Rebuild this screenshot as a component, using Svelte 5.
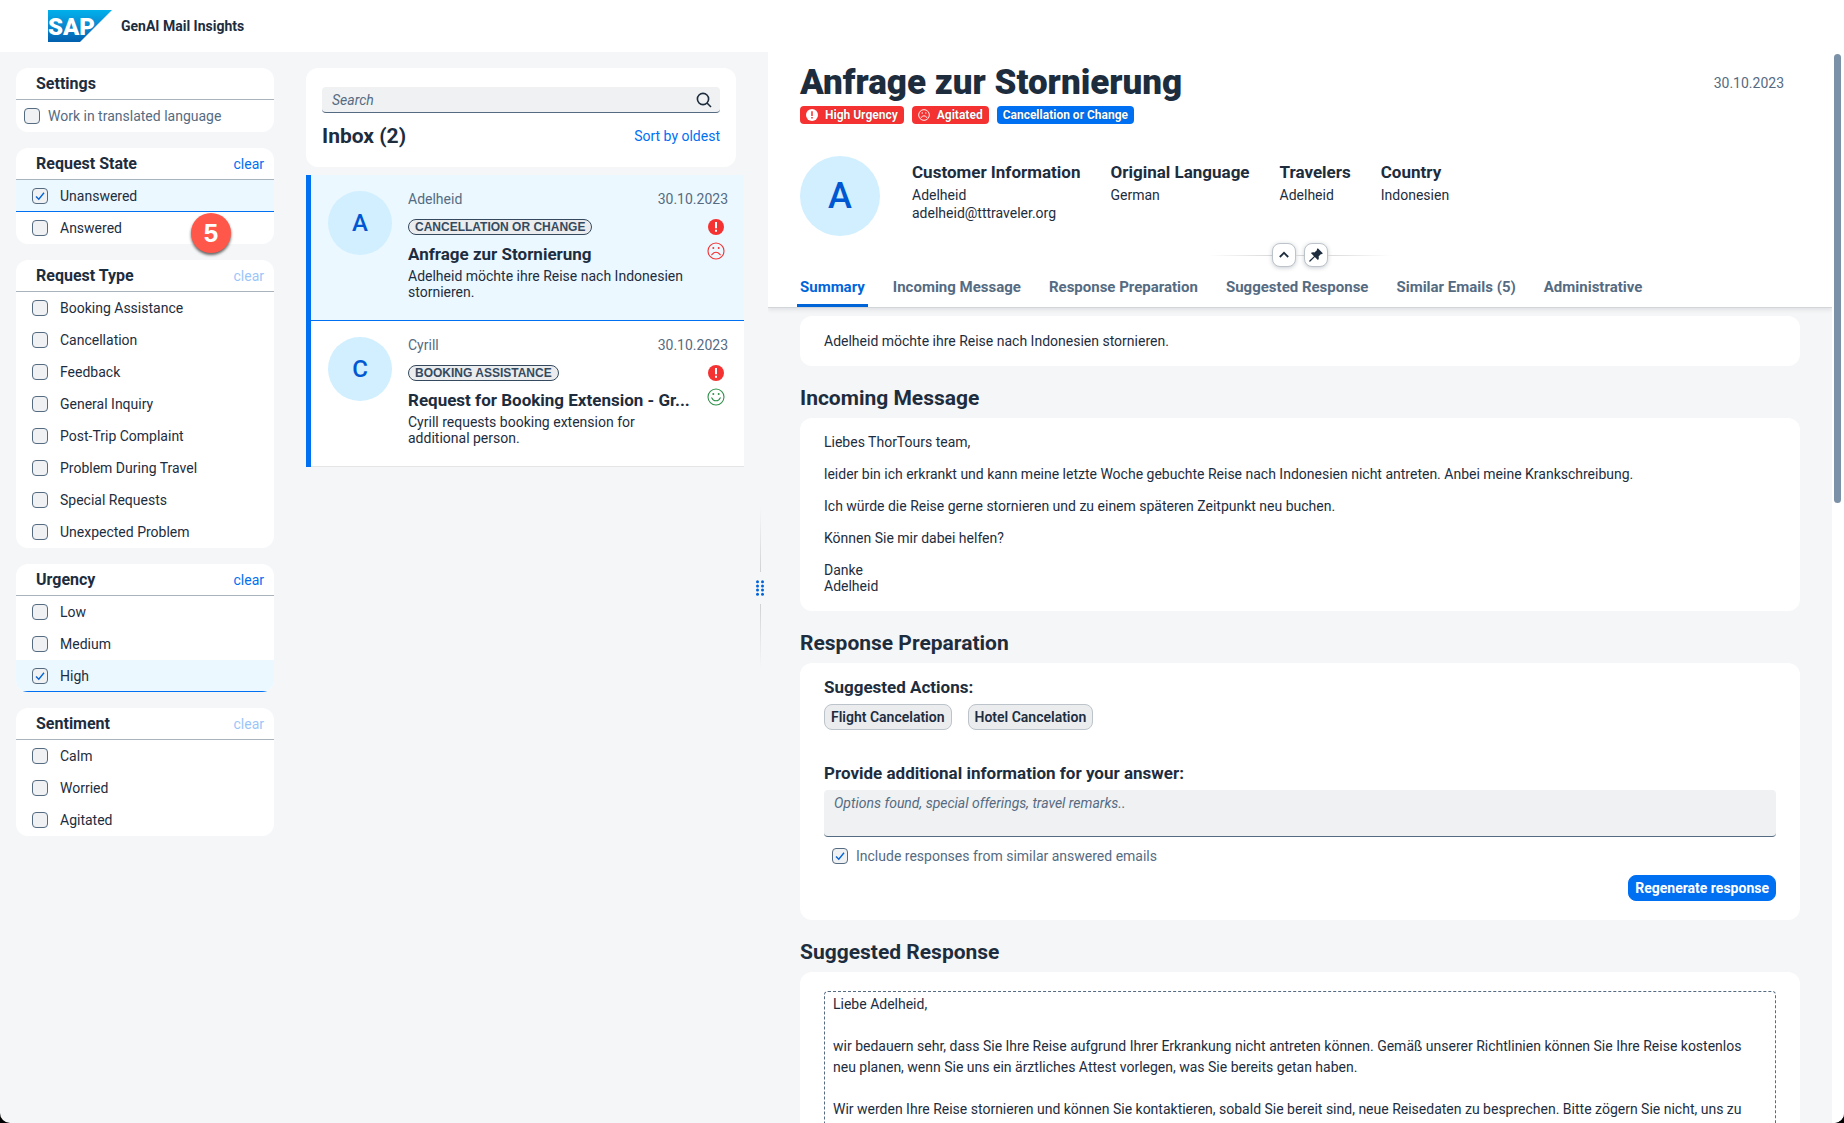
<script>
  const groups = [
    { title: 'Request State', clear: true, items: [['Unanswered', true], ['Answered', false]] },
    {
      title: 'Request Type',
      clear: false,
      items: [
        ['Booking Assistance', false],
        ['Cancellation', false],
        ['Feedback', false],
        ['General Inquiry', false],
        ['Post-Trip Complaint', false],
        ['Problem During Travel', false],
        ['Special Requests', false],
        ['Unexpected Problem', false]
      ]
    },
    { title: 'Urgency', clear: true, items: [['Low', false], ['Medium', false], ['High', true]] },
    { title: 'Sentiment', clear: false, items: [['Calm', false], ['Worried', false], ['Agitated', false]] }
  ];

  const mails = [
    {
      name: 'Adelheid',
      date: '30.10.2023',
      tag: 'CANCELLATION OR CHANGE',
      title: 'Anfrage zur Stornierung',
      text: 'Adelheid möchte ihre Reise nach Indonesien stornieren.',
      happy: false,
      selected: true
    },
    {
      name: 'Cyrill',
      date: '30.10.2023',
      tag: 'BOOKING ASSISTANCE',
      title: 'Request for Booking Extension - Gr...',
      text: 'Cyrill requests booking extension for additional person.',
      happy: true,
      selected: false
    }
  ];

  const facts = [
    ['Customer Information', ['Adelheid', 'adelheid@tttraveler.org']],
    ['Original Language', ['German']],
    ['Travelers', ['Adelheid']],
    ['Country', ['Indonesien']]
  ];

  const tabs = [
    'Summary',
    'Incoming Message',
    'Response Preparation',
    'Suggested Response',
    'Similar Emails (5)',
    'Administrative'
  ];

  const reply = [
    'Liebe Adelheid,',
    '',
    'wir bedauern sehr, dass Sie Ihre Reise aufgrund Ihrer Erkrankung nicht antreten können. Gemäß unserer Richtlinien können Sie Ihre Reise kostenlos',
    'neu planen, wenn Sie uns ein ärztliches Attest vorlegen, was Sie bereits getan haben.',
    '',
    'Wir werden Ihre Reise stornieren und können Sie kontaktieren, sobald Sie bereit sind, neue Reisedaten zu besprechen. Bitte zögern Sie nicht, uns zu'
  ].join('\n');
</script>

{#snippet check(label, checked)}
  <span class="box">
    <input type="checkbox" {checked} />
    <svg viewBox="0 0 16 16" aria-hidden="true"><path d="M4 8.4 L6.8 11.2 L12 4.8" /></svg>
  </span>
  <span>{label}</span>
{/snippet}

{#snippet alertIcon()}
  <svg class="alert" viewBox="0 0 16 16" aria-hidden="true">
    <circle cx="8" cy="8" r="8" />
    <path d="M7 3h2v6.2H7zM7 10.8h2v2H7z" />
  </svg>
{/snippet}

{#snippet face(happy)}
  <svg class="face" class:happy viewBox="0 0 18 18" aria-hidden="true">
    <circle class="ring" cx="9" cy="9" r="8" />
    <circle class="eye" cx="6.3" cy="6" r="1" />
    <circle class="eye" cx="11.7" cy="6" r="1" />
    {#if happy}
      <path d="M4.2 9.6 L5.2 10.4 C6 13.6 12 13.6 12.8 10.4 L13.8 9.6" />
    {:else}
      <path d="M4.4 13.2 L5.4 12.2 C7 9.6 11 9.6 12.6 12.2 L13.6 13.2 M5.4 12.2 L5 11.6 M12.6 12.2 L13 11.6" />
    {/if}
  </svg>
{/snippet}

<div class="app">
  <header class="shell">
    <svg class="logo" viewBox="0 0 64 32" role="img" aria-label="SAP">
      <defs>
        <linearGradient id="sap" x1="0" y1="0" x2="0" y2="1">
          <stop offset="0" stop-color="#00b1eb" />
          <stop offset="0.5" stop-color="#0a87cf" />
          <stop offset="1" stop-color="#0160ae" />
        </linearGradient>
      </defs>
      <polygon points="0,0 64,0 32,32 0,32" fill="url(#sap)" />
      <text x="0" y="25">SAP</text>
    </svg>
    <span class="product">GenAI Mail Insights</span>
  </header>

  <div class="columns">
    <aside class="filters">
      <section class="card">
        <div class="card-head"><h2>Settings</h2></div>
        <label class="row setting">{@render check('Work in translated language', false)}</label>
      </section>
      {#each groups as group, i}
        <section class="card">
          <div class="card-head">
            <h2>{group.title}</h2>
            <button class="link" disabled={!group.clear}>clear</button>
          </div>
          {#each group.items as [label, on]}
            <label class="row" class:on>{@render check(label, on)}</label>
          {/each}
          {#if i === 0}<span class="marker">5</span>{/if}
        </section>
      {/each}
    </aside>

    <section class="inbox">
      <div class="inbox-head">
        <div class="search">
          <input type="search" placeholder="Search" aria-label="Search" />
          <svg viewBox="0 0 16 16" aria-hidden="true"><circle cx="7" cy="7" r="5.6" /><path d="M11 11 L15 15" /></svg>
        </div>
        <div class="inbox-title">
          <h2>Inbox (2)</h2>
          <button class="link">Sort by oldest</button>
        </div>
      </div>
      <ul>
        {#each mails as mail}
          <li class="mail" class:selected={mail.selected}>
            <span class="avatar">{mail.name[0]}</span>
            <div class="mail-body">
              <div class="meta"><span>{mail.name}</span><span>{mail.date}</span></div>
              <div class="split">
                <div class="words">
                  <span class="tag">{mail.tag}</span>
                  <h3>{mail.title}</h3>
                  <p>{mail.text}</p>
                </div>
                <div class="icons">{@render alertIcon()}{@render face(mail.happy)}</div>
              </div>
            </div>
          </li>
        {/each}
      </ul>
    </section>

    <div class="splitter">
      <span class="line up"></span>
      <svg viewBox="0 0 8 16" aria-hidden="true">
        {#each [0, 1, 2, 3] as r}
          <circle cx="1.5" cy={1.7 + r * 4.2} r="1.5" /><circle cx="6.5" cy={1.7 + r * 4.2} r="1.5" />
        {/each}
      </svg>
      <span class="line down"></span>
    </div>

    <main class="detail">
      <header class="detail-head">
        <div class="title-line">
          <h1>Anfrage zur Stornierung</h1>
          <span class="date">30.10.2023</span>
        </div>
        <div class="badges">
          <span class="badge red">{@render alertIcon()}High Urgency</span>
          <span class="badge red">{@render face(false)}Agitated</span>
          <span class="badge blue">Cancellation or Change</span>
        </div>
        <div class="person">
          <span class="avatar large">A</span>
          <div class="facts">
            {#each facts as [head, values]}
              <div class="fact">
                <h3>{head}</h3>
                {#each values as value}<p>{value}</p>{/each}
              </div>
            {/each}
          </div>
        </div>
        <div class="handles">
          <span class="rule left"></span>
          <button aria-label="Collapse header">
            <svg viewBox="0 0 16 16"><path class="stroke" d="M3.8 10 L8 5.8 L12.2 10" /></svg>
          </button>
          <span class="rule mid"></span>
          <button aria-label="Pin header">
            <svg viewBox="0 0 16 16"><path d="M9.8 1.2 L14.8 6.2 L13.8 7.2 L13 6.9 L10.6 9.6 C11.1 11 10.8 12.2 9.9 13.1 L6.8 10 L2.4 14.6 L1.2 14.8 L1.4 13.6 L6 9.2 L2.9 6.1 C3.8 5.2 5 4.9 6.4 5.4 L9.1 3 L8.8 2.2 Z" /></svg>
          </button>
          <span class="rule right"></span>
        </div>
        <nav>
          {#each tabs as tab, i}
            <button class="tab" class:active={i === 0}>{tab}</button>
          {/each}
        </nav>
      </header>

      <div class="content">
        <section class="panel brief"><p>Adelheid möchte ihre Reise nach Indonesien stornieren.</p></section>

        <h2>Incoming Message</h2>
        <section class="panel letter">
          <p>Liebes ThorTours team,</p>
          <p>leider bin ich erkrankt und kann meine letzte Woche gebuchte Reise nach Indonesien nicht antreten. Anbei meine Krankschreibung.</p>
          <p>Ich würde die Reise gerne stornieren und zu einem späteren Zeitpunkt neu buchen.</p>
          <p>Können Sie mir dabei helfen?</p>
          <p>Danke<br />Adelheid</p>
        </section>

        <h2>Response Preparation</h2>
        <section class="panel prep">
          <h3>Suggested Actions:</h3>
          <div class="chips">
            <button class="chip">Flight Cancelation</button>
            <button class="chip">Hotel Cancelation</button>
          </div>
          <h3><label for="info">Provide additional information for your answer:</label></h3>
          <textarea id="info" class="info" placeholder="Options found, special offerings, travel remarks.."></textarea>
          <label class="row include">{@render check('Include responses from similar answered emails', true)}</label>
          <button class="primary">Regenerate response</button>
        </section>

        <h2>Suggested Response</h2>
        <section class="panel draft">
          <textarea class="reply" aria-label="Suggested Response" value={reply}></textarea>
        </section>
      </div>
    </main>

    <div class="scrollbar"><span></span></div>
  </div>
</div>

<style>
  :global(body) {
    margin: 0;
    background: #000;
  }
  .app {
    display: flex;
    flex-direction: column;
    height: 100vh;
    overflow: hidden;
    border-radius: 0 0 10px 10px;
    background: #f5f6f7;
    color: #1d2d3e;
    font: 14px/16px Roboto, 'Liberation Sans', sans-serif;
  }
  .app * {
    box-sizing: border-box;
  }
  h1, h2, h3, p, ul {
    margin: 0;
    padding: 0;
  }
  button, input, textarea {
    margin: 0;
    font: inherit;
    color: inherit;
  }
  button {
    padding: 0;
    border: 0;
    background: none;
  }
  .shell {
    display: flex;
    flex: none;
    align-items: center;
    gap: 9px;
    height: 52px;
    padding-left: 48px;
    background: #fff;
  }
  .logo {
    width: 64px;
    height: 32px;
  }
  .logo text {
    fill: #fff;
    font: 900 24px Roboto, sans-serif;
  }
  .product {
    font-weight: 700;
  }
  .columns {
    display: grid;
    flex: 1;
    grid-template-columns: 290px 462px 16px minmax(0, 1fr) 12px;
    min-height: 0;
  }

  .filters {
    display: flex;
    flex-direction: column;
    gap: 16px;
    padding: 16px;
  }
  .card {
    position: relative;
    border-radius: 12px;
    background: #fff;
  }
  .card-head {
    display: flex;
    align-items: center;
    justify-content: space-between;
    height: 32px;
    padding: 0 10px 0 20px;
    border-bottom: 1px solid #a8b3bd;
  }
  .card-head h2 {
    font-size: 16px;
    line-height: 20px;
  }
  .link {
    color: #0070f2;
  }
  .link:disabled {
    opacity: 0.4;
  }
  .row {
    display: flex;
    align-items: center;
    gap: 12px;
    height: 32px;
    padding-left: 16px;
  }
  .row.on {
    border-bottom: 1px solid #0070f2;
    background: #ebf8ff;
  }
  .card .row:last-of-type {
    clip-path: inset(0 round 0 0 12px 12px);
  }
  .setting {
    gap: 8px;
    padding-left: 8px;
    color: #556b82;
  }
  .box {
    display: grid;
    flex: none;
    width: 16px;
    height: 16px;
  }
  .box input, .box svg {
    grid-area: 1 / 1;
    width: 16px;
    height: 16px;
  }
  .box input {
    appearance: none;
    border: 1px solid #556b82;
    border-radius: 4px;
    background: #eff1f2;
  }
  .box svg {
    visibility: hidden;
    pointer-events: none;
    fill: none;
    stroke: #0064d9;
    stroke-width: 1.4;
  }
  .box input:checked + svg {
    visibility: visible;
  }
  .marker {
    position: absolute;
    right: 43px;
    bottom: -9px;
    width: 40px;
    height: 40px;
    border-radius: 50%;
    background: #ff574a;
    box-shadow: 0 2px 3px rgba(0, 0, 0, 0.6);
    color: #fff;
    font: 700 26px/40px 'Liberation Sans', sans-serif;
    text-align: center;
  }

  .inbox {
    padding: 16px 8px 0 16px;
  }
  .inbox-head {
    height: 99px;
    margin-right: 8px;
    padding: 19px 16px 0;
    border-radius: 12px;
    background: #fff;
  }
  .search {
    display: flex;
    align-items: center;
    height: 26px;
    padding: 0 8px 0 10px;
    border-bottom: 1px solid #556b82;
    border-radius: 4px;
    background: #eff1f2;
  }
  .search input {
    flex: 1;
    padding: 0;
    border: 0;
    outline: 0;
    background: none;
  }
  ::placeholder {
    color: #556b82;
    font-style: italic;
    opacity: 1;
  }
  .search svg {
    width: 16px;
    height: 16px;
    fill: none;
    stroke: #1d2d3e;
    stroke-width: 1.6;
  }
  .inbox-title {
    display: flex;
    align-items: center;
    justify-content: space-between;
    margin-top: 11px;
  }
  .inbox-title h2, .content h2 {
    font-size: 21px;
    line-height: 24px;
  }
  ul {
    margin-top: 8px;
    border-left: 5px solid #0070f2;
    list-style: none;
  }
  .mail {
    display: flex;
    gap: 16px;
    height: 146px;
    padding: 16px 16px 0 17px;
    border-bottom: 1px solid #e5e5e5;
    background: #fff;
  }
  .mail.selected {
    border-bottom-color: #0070f2;
    background: #ebf8ff;
  }
  .avatar {
    display: grid;
    flex: none;
    place-items: center;
    width: 64px;
    height: 64px;
    border-radius: 50%;
    background: #d1efff;
    color: #0057d2;
    font-size: 24px;
    font-weight: 500;
  }
  .mail-body {
    flex: 1;
    min-width: 0;
  }
  .meta {
    display: flex;
    justify-content: space-between;
    color: #556b82;
  }
  .split {
    display: flex;
    justify-content: space-between;
    margin-top: 12px;
  }
  .words {
    display: flex;
    flex: 0 1 284px;
    flex-direction: column;
    align-items: flex-start;
    min-width: 0;
  }
  .tag {
    padding: 0 6px;
    border: 1px solid #354a5f;
    border-radius: 8px;
    background: #eaecee;
    color: #354a5f;
    font: 700 12px/14px 'Liberation Sans', sans-serif;
  }
  .words h3 {
    margin-top: 9px;
    font-size: 17px;
    line-height: 20px;
    white-space: nowrap;
  }
  .words p {
    margin-top: 4px;
  }
  .icons {
    display: flex;
    flex-direction: column;
    align-items: center;
    gap: 7px;
    padding-right: 3px;
  }
  .alert {
    width: 16px;
    height: 16px;
    fill: #f53232;
  }
  .alert path {
    fill: #fff;
  }
  .face {
    width: 18px;
    height: 18px;
    fill: none;
    stroke: #f53232;
    stroke-width: 1.1;
  }
  .face .eye {
    fill: #f53232;
    stroke: none;
  }
  .face.happy {
    stroke: #30914c;
  }
  .face.happy .eye {
    fill: #30914c;
  }

  .splitter {
    display: flex;
    flex-direction: column;
    align-items: center;
    justify-content: center;
    gap: 8px;
  }
  .splitter svg {
    width: 8px;
    height: 16px;
    fill: #0064d9;
  }
  .line {
    width: 1px;
    height: 64px;
  }
  .line.up {
    background: linear-gradient(to top, #d0d3d6, #f5f6f7);
  }
  .line.down {
    background: linear-gradient(to bottom, #d0d3d6, #f5f6f7);
  }

  .detail {
    display: flex;
    flex-direction: column;
    min-width: 0;
    overflow: hidden;
  }
  .detail-head {
    flex: none;
    padding: 11px 32px 0;
    border-bottom: 1px solid #d2d6d9;
    background: #fff;
    box-shadow: 0 2px 4px rgba(34, 53, 72, 0.1);
  }
  .title-line {
    display: flex;
    align-items: center;
    justify-content: space-between;
    height: 40px;
    padding-right: 16px;
  }
  h1 {
    font-weight: 900;
    font-size: 35px;
    line-height: 40px;
  }
  .date {
    color: #556b82;
  }
  .badges {
    display: flex;
    gap: 8px;
    margin-top: 3px;
  }
  .badge {
    display: flex;
    align-items: center;
    gap: 7px;
    height: 18px;
    padding: 0 6px;
    border-radius: 4px;
    color: #fff;
    font-weight: 700;
    font-size: 12px;
    text-shadow: 0 0 1px rgba(0, 0, 0, 0.5);
  }
  .badge.red {
    background: #f53232;
  }
  .badge.blue {
    background: #0070f2;
  }
  .badge svg {
    width: 12px;
    height: 12px;
  }
  .badge .alert {
    fill: #fff;
  }
  .badge .alert path {
    fill: #f53232;
  }
  .badge .face {
    stroke: #fff;
    stroke-width: 1.4;
  }
  .badge .face .eye {
    fill: #fff;
  }
  .person {
    display: flex;
    gap: 32px;
    margin-top: 32px;
  }
  .facts {
    display: flex;
    gap: 30px;
  }
  .avatar.large {
    width: 80px;
    height: 80px;
    font-size: 36px;
  }
  .fact h3 {
    margin: 6px 0 4px;
    font-size: 17px;
    line-height: 20px;
  }
  .fact p {
    line-height: 18px;
  }
  .handles {
    display: flex;
    align-items: center;
    justify-content: center;
    margin-top: 7px;
  }
  .handles button {
    display: grid;
    place-items: center;
    width: 24px;
    height: 24px;
    border: 1px solid #bcc3ca;
    border-radius: 8px;
    background: #fff;
    box-shadow: 0 1px 4px rgba(34, 53, 72, 0.25);
  }
  .handles svg {
    width: 16px;
    height: 16px;
    fill: #1d2d3e;
  }
  .handles .stroke {
    fill: none;
    stroke: #1d2d3e;
    stroke-width: 1.8;
  }
  .rule {
    width: 64px;
    height: 1px;
    background: #d9d9d9;
  }
  .rule.mid {
    width: 8px;
  }
  .rule.left {
    background: linear-gradient(to left, #d9d9d9, #fff);
  }
  .rule.right {
    background: linear-gradient(to right, #d9d9d9, #fff);
  }
  nav {
    display: flex;
    gap: 22px;
    height: 40px;
    margin: 0 -3px;
  }
  .tab {
    padding: 0 3px;
    border-top: 3px solid transparent;
    border-bottom: 3px solid transparent;
    color: #556b82;
    font-weight: 700;
    font-size: 15px;
    white-space: nowrap;
  }
  .tab.active {
    border-bottom-color: #0064d9;
    color: #0064d9;
  }

  .content {
    flex: 1;
    min-height: 0;
    padding: 8px 32px 0;
  }
  .content h2 {
    margin: 20px 0 8px;
  }
  .panel {
    padding: 16px 24px;
    border-radius: 12px;
    background: #fff;
  }
  .brief {
    padding: 17px 24px;
  }
  .letter {
    display: grid;
    gap: 16px;
    padding-bottom: 17px;
  }
  .prep {
    display: flex;
    flex-direction: column;
    padding: 14px 24px 19px;
  }
  .prep h3 {
    font-size: 17px;
    line-height: 20px;
  }
  .chips {
    display: flex;
    gap: 16px;
    margin: 7px 0 33px;
  }
  .chip, .primary {
    height: 26px;
    padding: 0 6px;
    border: 1px solid #bcc3ca;
    border-radius: 8px;
    background: #eaecee;
    font-weight: 600;
  }
  .primary {
    align-self: flex-end;
    margin-top: 3px;
    border-color: #0070f2;
    background: #0070f2;
    color: #fff;
    font-weight: 700;
  }
  textarea {
    display: block;
    width: 100%;
    outline: 0;
    resize: none;
  }
  .info {
    height: 47px;
    margin-top: 7px;
    padding: 5px 10px;
    border: 0;
    border-bottom: 1px solid #556b82;
    border-radius: 4px;
    background: #eff1f2;
  }
  .include {
    gap: 8px;
    margin-top: 3px;
    padding-left: 8px;
    color: #556b82;
  }
  .draft {
    padding-top: 19px;
  }
  .reply {
    height: 400px;
    padding: 2px 8px;
    border: 1px dashed #556b82;
    border-radius: 4px;
    background: #fff;
    line-height: 21px;
    white-space: pre;
    overflow: hidden;
  }
  .scrollbar {
    padding: 2px 3px 0 2px;
    background: #fff;
  }
  .scrollbar span {
    display: block;
    height: 42%;
    border-radius: 4px;
    background: #7b91a8;
  }
</style>
